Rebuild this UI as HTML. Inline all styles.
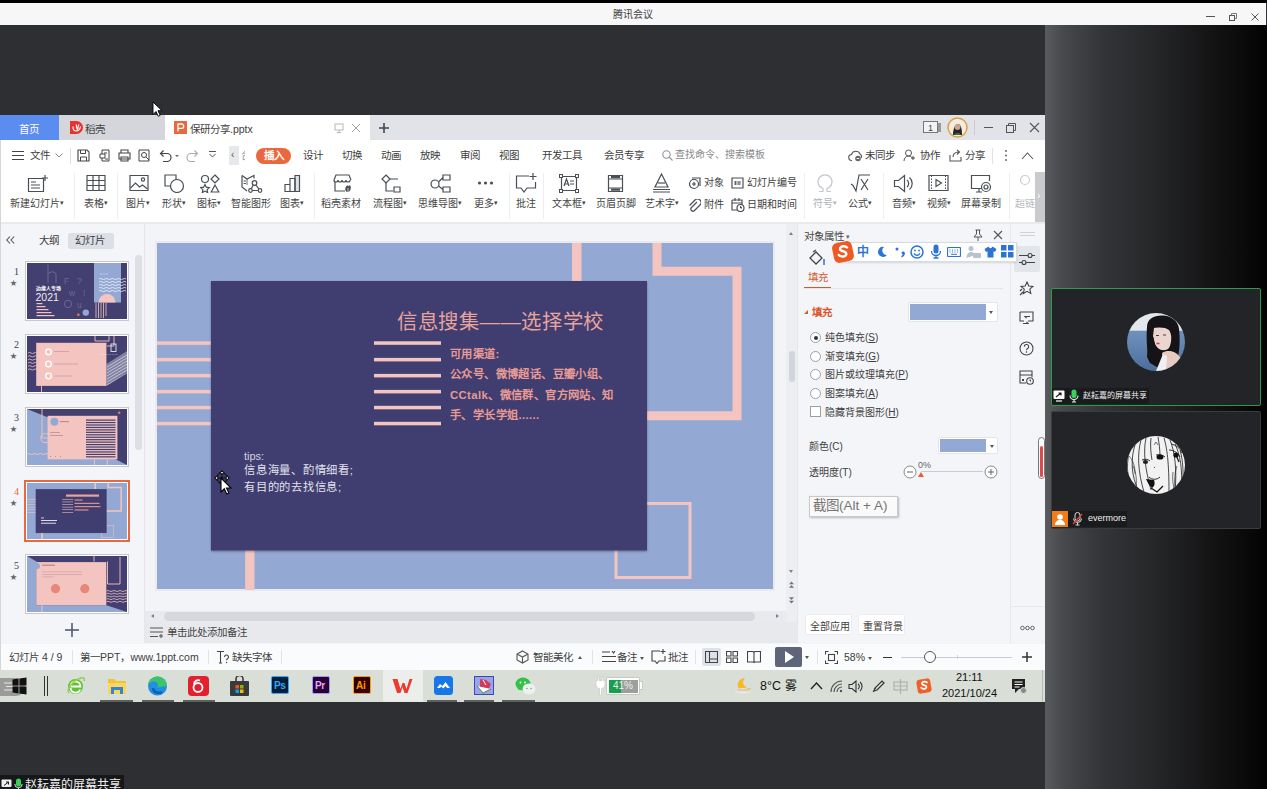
<!DOCTYPE html>
<html lang="zh-CN"><head><meta charset="utf-8">
<style>
*{margin:0;padding:0;box-sizing:border-box}
html,body{width:1267px;height:789px;overflow:hidden;background:#2e2f33;font-family:"Liberation Sans",sans-serif;position:relative}
.a{position:absolute}
.t{position:absolute;white-space:nowrap;line-height:1}
#topbar{left:0;top:0;width:1267px;height:3px;background:#000}
#title{left:0;top:3px;width:1266px;height:22px;background:#f7f7f8}
#rside{left:1045px;top:25px;width:222px;height:764px;background:linear-gradient(to right,#5a5b5f 0%,#48494c 8%,#343538 25%,#252628 50%,#141415 75%,#030303 100%)}
#wps{left:0;top:115px;width:1045px;height:587px;background:#fff;overflow:hidden}
#tabbar{left:0;top:0;width:1045px;height:25px;background:#e1e3e8}
#menu{left:0;top:25px;width:1045px;height:28px;background:#fff}
#tools{left:0;top:54px;width:1045px;height:53px;background:#fff}
#work{left:0;top:109px;border-top:0;width:1045px;height:420px;background:#f3f4f7}
#status{left:0;top:529px;width:1045px;height:26px;background:#fafbfc}
#taskbar{left:0;top:555px;width:1045px;height:32px;background:#d9ded7}
</style></head><body>
<div class="a" id="topbar"></div>
<div class="a" id="title">
  <div class="t" style="left:613px;top:7px;font-size:10px;color:#404040">腾讯会议</div>
  <div class="a" style="left:1206px;top:13px;width:9px;height:1px;background:#555"></div>
  <svg class="a" style="left:1229px;top:10px" width="8" height="8" viewBox="0 0 8 8"><rect x=".5" y="2.5" width="5" height="5" fill="none" stroke="#555"/><path d="M2.5 2.5V.5h5v5h-2" fill="none" stroke="#777"/></svg>
  <svg class="a" style="left:1251px;top:10px" width="8" height="8" viewBox="0 0 8 8"><path d="M.5 .5L7.5 7.5M7.5 .5L.5 7.5" stroke="#555" stroke-width="1"/></svg>
</div>
<div class="a" id="rside"></div>
<div class="a" id="wps">
  <div class="a" id="tabbar">
    <div class="a" style="left:0;top:0;width:59px;height:25px;background:#5b8df0"></div>
    <div class="t" style="left:19px;top:8.5px;font-size:10.5px;color:#fff">首页</div>
    <div class="a" style="left:59px;top:0;width:106px;height:25px;background:#d4d6db"></div>
    <svg class="a" style="left:70px;top:6px" width="13" height="13" viewBox="0 0 13 13"><path d="M0 0h6.5a6.5 6.5 0 0 1 0 13H0z" fill="#e8322f"/><path d="M3 5.5c0 3 1.5 4.5 3 4.5M6 10c2 0 4-1.5 4.5-4.5M6.5 3.5c-.5 2 0 4 1 5.5M9 3.5c-1 1.5-1.5 3-1 4.5" stroke="#fff" stroke-width="1.2" fill="none"/></svg>
    <div class="t" style="left:85px;top:8.5px;font-size:10.5px;color:#444">稻壳</div>
    <div class="a" style="left:165px;top:0;width:205px;height:25px;background:#fff"></div>
    <svg class="a" style="left:174px;top:6px" width="13" height="13" viewBox="0 0 13 13"><rect width="13" height="13" fill="#e8693c"/><path d="M4 10.5V3h3.5a2.2 2.2 0 0 1 0 4.4H4" stroke="#fff" stroke-width="1.3" fill="none"/></svg>
    <div class="t" style="left:190px;top:8.5px;font-size:10.5px;color:#404040">保研分享.pptx</div>
    <svg class="a" style="left:334px;top:8px" width="10" height="10" viewBox="0 0 10 10"><rect x="1" y="1" width="8" height="6" fill="none" stroke="#b8b8b8"/><path d="M5 7v2M3 9.5h4" stroke="#b8b8b8"/></svg>
    <svg class="a" style="left:351px;top:8px" width="10" height="10" viewBox="0 0 10 10"><path d="M1 1L9 9M9 1L1 9" stroke="#a0a0a0" stroke-width="1"/></svg>
    <svg class="a" style="left:378px;top:7px" width="12" height="12" viewBox="0 0 12 12"><path d="M6 1v10M1 6h10" stroke="#3e4452" stroke-width="1.6"/></svg>
    <svg class="a" style="left:923px;top:6px" width="19" height="12" viewBox="0 0 19 12"><rect x="0.5" y="0.5" width="14" height="11" fill="#f2f3f5" stroke="#777"/><rect x="15" y="2" width="3" height="9" fill="#999"/><text x="7.5" y="9.5" font-size="9" text-anchor="middle" fill="#444" font-family="Liberation Sans">1</text></svg>
    <svg class="a" style="left:947px;top:2px" width="21" height="21" viewBox="0 0 21 21"><circle cx="10.5" cy="10.5" r="9.5" fill="#f3ece3" stroke="#d9a440" stroke-width="1.5"/><path d="M6 18c0-6 2-11 5-11s4 5 4 11z" fill="#2a2222"/><circle cx="10.5" cy="10" r="3" fill="#caa48c"/><path d="M7 18c1-3 6-3 7 0z" fill="#3d6b3d"/></svg>
    <div class="a" style="left:974px;top:5px;width:1px;height:15px;background:#ccc"></div>
    <div class="a" style="left:984px;top:12px;width:9px;height:1px;background:#555"></div>
    <svg class="a" style="left:1005px;top:7px" width="12" height="11" viewBox="0 0 12 11"><rect x="1.5" y="3.5" width="7" height="7" fill="none" stroke="#555"/><path d="M3.5 3.5V1.5h7v7h-2" fill="none" stroke="#555"/></svg>
    <svg class="a" style="left:1029px;top:7px" width="11" height="11" viewBox="0 0 11 11"><path d="M1 1L10 10M10 1L1 10" stroke="#555" stroke-width="1.1"/></svg>
  </div>
  <div class="a" id="menu"><div class="a" style="left:0;top:1px;width:1045px;height:27px"><svg class="a" style="left:12px;top:10px" width="12" height="9" viewBox="0 0 12 9"><path d="M0 .5h12M0 4.5h12M0 8.5h12" stroke="#444"/></svg><div class="t" style="left:30px;top:9px;font-size:10.5px;color:#404040;">文件</div><svg class="a" style="left:55px;top:12px" width="8" height="5" viewBox="0 0 8 5"><path d="M.5.5L4 4 7.5.5" stroke="#888" fill="none"/></svg><div class="a" style="left:70px;top:7px;width:1px;height:16px;background:#e0e0e0"></div><svg class="a" style="left:77px;top:8px" width="13" height="13" viewBox="0 0 13 13"><path d="M1 1h9l2 2v9H1z" fill="none" stroke="#444" stroke-width="1.1"/><path d="M3.5 1v3.5h5V1M3.5 12V8h6v4" fill="none" stroke="#444"/></svg><svg class="a" style="left:99px;top:8px" width="13" height="13" viewBox="0 0 13 13"><path d="M3 1h7v11H3z" fill="none" stroke="#444"/><path d="M1 5h5v4H1z" fill="#fff" stroke="#444"/><path d="M5 4h3M6 10h3" stroke="#444"/></svg><svg class="a" style="left:118px;top:8px" width="13" height="13" viewBox="0 0 13 13"><path d="M3 4V1h7v3M1 4h11v6H1zM3 8h7v4H3z" fill="#fff" stroke="#444" stroke-width="1.1"/></svg><svg class="a" style="left:138px;top:8px" width="13" height="13" viewBox="0 0 13 13"><path d="M1 1h10v11H1z" fill="none" stroke="#444"/><circle cx="6" cy="6" r="2.5" fill="none" stroke="#444"/><path d="M8 8l3 3" stroke="#444"/></svg><svg class="a" style="left:159px;top:8px" width="13" height="13" viewBox="0 0 13 13"><path d="M2 4.5h6a4 4 0 0 1 0 8H4M4.5 1.5L1.5 4.5 4.5 7.5" fill="none" stroke="#444" stroke-width="1.2"/></svg><div class="a" style="left:175px;top:14px;width:0;height:0;border-left:2px solid transparent;border-right:2px solid transparent;border-top:2px solid #666"></div><svg class="a" style="left:186px;top:8px" width="13" height="13" viewBox="0 0 13 13"><path d="M11 4.5H5a4 4 0 0 0 0 8h4M8.5 1.5l3 3-3 3" fill="none" stroke="#aaa" stroke-width="1.1"/></svg><svg class="a" style="left:209px;top:10px" width="7" height="8" viewBox="0 0 7 8"><path d="M0 .5h7M.5 3l3 3 3-3" stroke="#555" fill="none"/></svg><div class="a" style="left:229px;top:5px;width:10px;height:19px;background:#e6e8ec"></div><div class="t" style="left:231px;top:9px;font-size:10px;color:#555;">‹</div><div class="t" style="left:241px;top:9px;font-size:10.5px;color:#999;width:4px;overflow:hidden">台</div><div class="a" style="left:256px;top:7px;width:35px;height:16px;border-radius:8px;background:#e9683e"></div><div class="t" style="left:264px;top:9px;font-size:10.5px;color:#fff;font-weight:bold">插入</div><div class="t" style="left:303px;top:9px;font-size:10.5px;color:#404040;">设计</div><div class="t" style="left:342px;top:9px;font-size:10.5px;color:#404040;">切换</div><div class="t" style="left:381px;top:9px;font-size:10.5px;color:#404040;">动画</div><div class="t" style="left:420px;top:9px;font-size:10.5px;color:#404040;">放映</div><div class="t" style="left:460px;top:9px;font-size:10.5px;color:#404040;">审阅</div><div class="t" style="left:499px;top:9px;font-size:10.5px;color:#404040;">视图</div><div class="t" style="left:542px;top:9px;font-size:10.5px;color:#404040;">开发工具</div><div class="t" style="left:604px;top:9px;font-size:10.5px;color:#404040;">会员专享</div><svg class="a" style="left:662px;top:9px" width="11" height="11" viewBox="0 0 11 11"><circle cx="4.5" cy="4.5" r="3.7" fill="none" stroke="#8a9099" stroke-width="1.1"/><path d="M7.2 7.2L10.5 10.5" stroke="#8a9099" stroke-width="1.1"/></svg><div class="t" style="left:675px;top:9px;font-size:10px;color:#888;">查找命令、搜索模板</div><svg class="a" style="left:848px;top:9px" width="15" height="12" viewBox="0 0 15 12"><path d="M4 10.5a3 3 0 0 1-.5-6A4.5 4.5 0 0 1 12 4a3 3 0 0 1 1 4" fill="none" stroke="#555" stroke-width="1.1"/><circle cx="10" cy="8.5" r="2.8" fill="#666"/><path d="M8.7 8.5h2.6" stroke="#fff"/></svg><div class="t" style="left:865px;top:9px;font-size:10.5px;color:#404040;">未同步</div><svg class="a" style="left:903px;top:8px" width="13" height="13" viewBox="0 0 13 13"><circle cx="5.5" cy="4" r="3" fill="none" stroke="#555"/><path d="M1 12c0-3 2-5 4.5-5s4 1.5 4.5 3M10 7v4M8 9h4" fill="none" stroke="#555"/></svg><div class="t" style="left:920px;top:9px;font-size:10.5px;color:#404040;">协作</div><svg class="a" style="left:949px;top:8px" width="13" height="13" viewBox="0 0 13 13"><path d="M1 6v6h11V8M4 8c0-3 2-5 6-5M8 1l2.5 2L8 5.5" fill="none" stroke="#555" stroke-width="1.1"/></svg><div class="t" style="left:965px;top:9px;font-size:10.5px;color:#404040;">分享</div><div class="a" style="left:992px;top:7px;width:1px;height:16px;background:#e3e3e3"></div><svg class="a" style="left:1004px;top:8px" width="4" height="13" viewBox="0 0 4 13"><circle cx="2" cy="2" r="1" fill="#666"/><circle cx="2" cy="6.5" r="1" fill="#666"/><circle cx="2" cy="11" r="1" fill="#666"/></svg><svg class="a" style="left:1021px;top:11px" width="13" height="8" viewBox="0 0 13 8"><path d="M1 7l5.5-6L12 7" fill="none" stroke="#555" stroke-width="1.1"/></svg></div></div>
  <div class="a" id="tools"><svg class="a" style="left:27px;top:5px" width="22" height="19" viewBox="0 0 22 19"><path d="M1.5 4.5h15v13h-15z" fill="none" stroke="#4a4f57" stroke-width="1.2"/><path d="M4 8h5M4 11h9M4 14h9" fill="none" stroke="#4a4f57" stroke-width="1.2"/><path d="M18 1v6M15 4h6" fill="none" stroke="#4a4f57" stroke-width="1.2"/></svg><div class="t" style="left:-23px;top:30px;width:120px;text-align:center;font-size:10px;color:#444">新建幻灯片<span style='font-size:7px;vertical-align:2px'>▾</span></div><div class="a" style="left:74px;top:4px;width:1px;height:46px;background:#eceef0"></div><svg class="a" style="left:86px;top:5px" width="20" height="18" viewBox="0 0 20 18"><path d="M1 1.5h18v15H1zM1 6.5h18M1 11.5h18M7 1.5v15M13 1.5v15" fill="none" stroke="#4a4f57" stroke-width="1.2"/></svg><div class="t" style="left:36px;top:30px;width:120px;text-align:center;font-size:10px;color:#444">表格<span style='font-size:7px;vertical-align:2px'>▾</span></div><div class="a" style="left:117px;top:4px;width:1px;height:46px;background:#eceef0"></div><svg class="a" style="left:129px;top:5px" width="20" height="18" viewBox="0 0 20 18"><path d="M1 1.5h18v15H1z" fill="none" stroke="#4a4f57" stroke-width="1.2"/><path d="M1.5 14l5-5 4 4 3-2 5 4" fill="none" stroke="#4a4f57" stroke-width="1.2"/><circle cx="14" cy="5.5" r="1.6" fill="none" stroke="#4a4f57" stroke-width="1.2"/></svg><div class="t" style="left:78px;top:30px;width:120px;text-align:center;font-size:10px;color:#444">图片<span style='font-size:7px;vertical-align:2px'>▾</span></div><svg class="a" style="left:164px;top:5px" width="21" height="19" viewBox="0 0 21 19"><path d="M1 1h11v11H1z" fill="none" stroke="#4a4f57" stroke-width="1.2"/><circle cx="13" cy="12" r="6.5" fill="#fff" stroke="#4a4f57" stroke-width="1.2"/></svg><div class="t" style="left:114px;top:30px;width:120px;text-align:center;font-size:10px;color:#444">形状<span style='font-size:7px;vertical-align:2px'>▾</span></div><svg class="a" style="left:200px;top:5px" width="20" height="19" viewBox="0 0 20 19"><circle cx="5" cy="5" r="3.5" fill="none" stroke="#4a4f57" stroke-width="1.2"/><path d="M15 1l4 4-4 4-4-4z" fill="none" stroke="#4a4f57" stroke-width="1.2"/><path d="M5 10.5l1.3 2.7 3 .4-2.2 2 .6 3-2.7-1.5-2.7 1.5.6-3-2.2-2 3-.4z" fill="none" stroke="#4a4f57" stroke-width="1.2"/><path d="M15 11l3.8 7h-7.6z" fill="none" stroke="#4a4f57" stroke-width="1.2"/></svg><div class="t" style="left:149px;top:30px;width:120px;text-align:center;font-size:10px;color:#444">图标<span style='font-size:7px;vertical-align:2px'>▾</span></div><svg class="a" style="left:241px;top:5px" width="22" height="19" viewBox="0 0 22 19"><path d="M1 1.5L6 5l7-3.5v3" fill="none" stroke="#4a4f57" stroke-width="1.2"/><path d="M1 1.5V13l5 4" fill="none" stroke="#4a4f57" stroke-width="1.2"/><path d="M6 5v6" stroke="#4a4f57" stroke-width=".8"/><path d="M2.5 7h2.5M2.5 9.5h2.5" stroke="#4a4f57" stroke-width=".9"/><circle cx="13.5" cy="9" r="2.3" fill="none" stroke="#4a4f57" stroke-width="1.2"/><circle cx="9.5" cy="16.5" r="1.8" fill="none" stroke="#4a4f57" stroke-width="1.2"/><circle cx="19" cy="16.5" r="1.8" fill="none" stroke="#4a4f57" stroke-width="1.2"/><path d="M12.3 11l-2 3.8M14.8 11l3 3.8M11.3 16.5h5.9" fill="none" stroke="#4a4f57" stroke-width="1.2"/></svg><div class="t" style="left:191px;top:30px;width:120px;text-align:center;font-size:10px;color:#444">智能图形</div><svg class="a" style="left:284px;top:5px" width="17" height="19" viewBox="0 0 17 19"><path d="M11 1.5h4.5v16H11z" fill="#dfe2e8" stroke="#4a4f57" stroke-width="1.2"/><path d="M1 10.5h5v7H1zM6 4.5h5v13H6z" fill="none" stroke="#4a4f57" stroke-width="1.2"/></svg><div class="t" style="left:232px;top:30px;width:120px;text-align:center;font-size:10px;color:#444">图表<span style='font-size:7px;vertical-align:2px'>▾</span></div><div class="a" style="left:314px;top:4px;width:1px;height:46px;background:#eceef0"></div><svg class="a" style="left:333px;top:5px" width="20" height="19" viewBox="0 0 20 19"><path d="M1 6l2-5h13l2 5" fill="none" stroke="#4a4f57" stroke-width="1.2"/><path d="M1 6c0 1.5 1 2 2 2s2-.5 2-2c0 1.5 1 2 2 2s2-.5 2-2c0 1.5 1 2 2 2s2-.5 2-2c0 1.5 1 2 2 2s2-.5 2-2" fill="none" stroke="#4a4f57" stroke-width="1.2"/><path d="M2 8v9h10" fill="none" stroke="#4a4f57" stroke-width="1.2"/><path d="M14.5 18c-3 0-3-5 0-7 .5 2 1 1 2.5 0 1.5 2 1 7-2.5 7z" fill="#4a4f57"/><path d="M15 18v-4" stroke="#fff" stroke-width=".7"/></svg><div class="t" style="left:281px;top:30px;width:120px;text-align:center;font-size:10px;color:#444">稻壳素材</div><svg class="a" style="left:380px;top:5px" width="22" height="19" viewBox="0 0 22 19"><path d="M6 1l4 4-4 4-4-4z" fill="none" stroke="#4a4f57" stroke-width="1.2"/><path d="M10 5h8M6 9v8h7" fill="none" stroke="#4a4f57" stroke-width="1.2"/><path d="M14 13h6v5h-6z" fill="none" stroke="#4a4f57" stroke-width="1.2"/></svg><div class="t" style="left:330px;top:30px;width:120px;text-align:center;font-size:10px;color:#444">流程图<span style='font-size:7px;vertical-align:2px'>▾</span></div><svg class="a" style="left:430px;top:5px" width="21" height="19" viewBox="0 0 21 19"><circle cx="5" cy="10" r="4" fill="none" stroke="#4a4f57" stroke-width="1.2"/><path d="M13 1h7v5h-7zM13 13h7v5h-7zM8.5 8l4.5-4.5M8.5 12l4.5 3.5" fill="none" stroke="#4a4f57" stroke-width="1.2"/></svg><div class="t" style="left:380px;top:30px;width:120px;text-align:center;font-size:10px;color:#444">思维导图<span style='font-size:7px;vertical-align:2px'>▾</span></div><svg class="a" style="left:477px;top:11px" width="17" height="6" viewBox="0 0 17 6"><circle cx="2.5" cy="3" r="1.6" fill="#4a4f57"/><circle cx="8.5" cy="3" r="1.6" fill="#4a4f57"/><circle cx="14.5" cy="3" r="1.6" fill="#4a4f57"/></svg><div class="t" style="left:426px;top:30px;width:120px;text-align:center;font-size:10px;color:#444">更多<span style='font-size:7px;vertical-align:2px'>▾</span></div><div class="a" style="left:509px;top:4px;width:1px;height:46px;background:#eceef0"></div><svg class="a" style="left:515px;top:4px" width="22" height="20" viewBox="0 0 22 20"><path d="M14 3H1.5v12H6l3 4 3-4h8.5v-6" fill="none" stroke="#4a4f57" stroke-width="1.2"/><path d="M18 0v7M14.5 3.5h7" fill="none" stroke="#4a4f57" stroke-width="1.2"/></svg><div class="t" style="left:466px;top:30px;width:120px;text-align:center;font-size:10px;color:#444">批注</div><div class="a" style="left:543px;top:4px;width:1px;height:46px;background:#eceef0"></div><svg class="a" style="left:559px;top:5px" width="20" height="19" viewBox="0 0 20 19"><path d="M2.5 2.5h15v14h-15z" fill="none" stroke="#4a4f57" stroke-width="1.2"/><rect x="0.5" y="0.5" width="3" height="3" fill="#fff" stroke="#4a4f57"/><rect x="16.5" y="0.5" width="3" height="3" fill="#fff" stroke="#4a4f57"/><rect x="0.5" y="15.5" width="3" height="3" fill="#fff" stroke="#4a4f57"/><rect x="16.5" y="15.5" width="3" height="3" fill="#fff" stroke="#4a4f57"/><path d="M5 12l2.5-7 2.5 7M6 10h3M11 7h4M11 10h4" fill="none" stroke="#4a4f57" stroke-width="1.2"/></svg><div class="t" style="left:509px;top:30px;width:120px;text-align:center;font-size:10px;color:#444">文本框<span style='font-size:7px;vertical-align:2px'>▾</span></div><svg class="a" style="left:607px;top:5px" width="17" height="19" viewBox="0 0 17 19"><path d="M1.5 1.5h14v16h-14z" fill="none" stroke="#4a4f57" stroke-width="1.2"/><path d="M1.5 5h14M1.5 14h14" fill="none" stroke="#4a4f57" stroke-width="1.2"/><path d="M4 3.2h9M4 15.7h9" stroke="#4a4f57" stroke-width="2.2"/></svg><div class="t" style="left:556px;top:30px;width:120px;text-align:center;font-size:10px;color:#444">页眉页脚</div><svg class="a" style="left:652px;top:4px" width="19" height="20" viewBox="0 0 19 20"><path d="M9.5 1L3 14h13z" fill="none" stroke="#4a4f57" stroke-width="1.2"/><path d="M6 10h7" fill="none" stroke="#4a4f57" stroke-width="1.2"/><path d="M1 16.5h17M1 19h17" fill="none" stroke="#4a4f57" stroke-width="1.2"/></svg><div class="t" style="left:602px;top:30px;width:120px;text-align:center;font-size:10px;color:#444">艺术字<span style='font-size:7px;vertical-align:2px'>▾</span></div><svg class="a" style="left:688px;top:8px" width="13" height="13" viewBox="0 0 13 13"><path d="M4 1h8v8" fill="none" stroke="#4a4f57" stroke-width="1.2"/><circle cx="6" cy="7" r="4.5" fill="none" stroke="#4a4f57" stroke-width="1.2"/><path d="M4 7h4M6 5v4" fill="none" stroke="#4a4f57" stroke-width="1.2"/></svg><div class="t" style="left:704px;top:9px;font-size:10px;color:#404040;">对象</div><svg class="a" style="left:688px;top:30px" width="13" height="13" viewBox="0 0 13 13"><path d="M9 3L3.5 8.5a2 2 0 0 0 3 3L12 6a3.5 3.5 0 0 0-5-5L1.5 6.5" fill="none" stroke="#4a4f57" stroke-width="1.2"/></svg><div class="t" style="left:704px;top:31px;font-size:10px;color:#404040;">附件</div><svg class="a" style="left:731px;top:8px" width="13" height="12" viewBox="0 0 13 12"><path d="M1 1h11v10H1z" fill="none" stroke="#4a4f57" stroke-width="1.2"/><path d="M4.5 4v4M8 4v4M3 5h7M3 7h7" stroke="#4a4f57" stroke-width=".8"/></svg><div class="t" style="left:747px;top:9px;font-size:10px;color:#404040;">幻灯片编号</div><svg class="a" style="left:731px;top:29px" width="14" height="14" viewBox="0 0 14 14"><path d="M1 2h10v5M1 2v10h5M1 5h10M4 0v3M8 0v3" fill="none" stroke="#4a4f57" stroke-width="1.2"/><circle cx="9.5" cy="10" r="3.5" fill="none" stroke="#4a4f57" stroke-width="1.2"/><path d="M9.5 8v2h1.5" stroke="#4a4f57"/></svg><div class="t" style="left:747px;top:31px;font-size:10px;color:#404040;">日期和时间</div><div class="a" style="left:804px;top:4px;width:1px;height:46px;background:#eceef0"></div><svg class="a" style="left:815px;top:5px" width="20" height="19" viewBox="0 0 20 19"><path d="M4 17.5h4v-3a7 7 0 1 1 4 0v3h4" fill="none" stroke="#c4c7cc" stroke-width="1.2"/></svg><div class="t" style="left:765px;top:30px;width:120px;text-align:center;font-size:10px;color:#b0b3b8">符号<span style='font-size:7px;vertical-align:2px'>▾</span></div><svg class="a" style="left:850px;top:5px" width="21" height="19" viewBox="0 0 21 19"><path d="M1 10l2 1.5L6 17 9 1h11" fill="none" stroke="#4a4f57" stroke-width="1.2"/><path d="M11 5l7 11M18 5l-7 11" fill="none" stroke="#4a4f57" stroke-width="1.2"/></svg><div class="t" style="left:800px;top:30px;width:120px;text-align:center;font-size:10px;color:#444">公式<span style='font-size:7px;vertical-align:2px'>▾</span></div><div class="a" style="left:883px;top:4px;width:1px;height:46px;background:#eceef0"></div><svg class="a" style="left:893px;top:5px" width="21" height="19" viewBox="0 0 21 19"><path d="M1.5 6.5h4l6-5v16l-6-5h-4z" fill="none" stroke="#4a4f57" stroke-width="1.2"/><path d="M14 6a4.5 4.5 0 0 1 0 7M16.5 3.5a8 8 0 0 1 0 12" fill="none" stroke="#4a4f57" stroke-width="1.2"/></svg><div class="t" style="left:844px;top:30px;width:120px;text-align:center;font-size:10px;color:#444">音频<span style='font-size:7px;vertical-align:2px'>▾</span></div><svg class="a" style="left:928px;top:5px" width="21" height="18" viewBox="0 0 21 18"><path d="M1 1.5h19v15H1z" fill="none" stroke="#4a4f57" stroke-width="1.2"/><path d="M3.5 1.5v15M17.5 1.5v15" stroke="#4a4f57" stroke-width="1" stroke-dasharray="1.5 1.5"/><path d="M8 5.5v7l5.5-3.5z" fill="none" stroke="#4a4f57" stroke-width="1.2"/></svg><div class="t" style="left:879px;top:30px;width:120px;text-align:center;font-size:10px;color:#444">视频<span style='font-size:7px;vertical-align:2px'>▾</span></div><svg class="a" style="left:970px;top:5px" width="22" height="19" viewBox="0 0 22 19"><path d="M14 14.5H1.5v-13h18V7" fill="none" stroke="#4a4f57" stroke-width="1.2"/><path d="M6 18h6M9 14.5V18" fill="none" stroke="#4a4f57" stroke-width="1.2"/><circle cx="16" cy="13" r="4.5" fill="#fff" stroke="#4a4f57" stroke-width="1.2"/><circle cx="16" cy="13" r="2" fill="none" stroke="#4a4f57" stroke-width="1.2"/></svg><div class="t" style="left:921px;top:30px;width:120px;text-align:center;font-size:10px;color:#444">屏幕录制</div><div class="a" style="left:1009px;top:4px;width:1px;height:46px;background:#eceef0"></div><svg class="a" style="left:1016px;top:5px" width="18" height="19" viewBox="0 0 18 19"><circle cx="9" cy="6" r="4.5" fill="none" stroke="#c8cbd0" stroke-width="1.2"/></svg><div class="t" style="left:1015px;top:30px;font-size:10px;color:#b8bbc0;width:20px;overflow:hidden">超链</div><div class="a" style="left:1035px;top:3px;width:10px;height:50px;background:#c9cacd"></div><div class="t" style="left:1037px;top:22px;font-size:10px;color:#fff;">›</div></div>
  <div class="a" style="left:0;top:107px;width:1045px;height:2px;background:#e9eaee"></div><div class="a" id="work"></div>
  <div class="a" id="status"></div>
  <div class="a" id="taskbar"></div>
</div>
<div class="a" style="left:0px;top:224px;width:144px;height:419px;background:#f4f5f8;"></div><div class="a" style="left:144px;top:224px;width:1px;height:419px;background:#e4e6ea;"></div><svg class="a" style="left:6px;top:236px" width="9" height="8" viewBox="0 0 9 8"><path d="M4 .5L.8 4 4 7.5M8.2.5L5 4l3.2 3.5" fill="none" stroke="#555" stroke-width="1.1"/></svg><div class="t" style="left:39px;top:235px;font-size:10.5px;color:#404040;">大纲</div><div class="a" style="left:68px;top:233px;width:46px;height:16px;background:#dcdfe5;border-radius:2px"></div><div class="t" style="left:75px;top:235px;font-size:10.5px;color:#404040;">幻灯片</div><div class="a" style="left:135px;top:255px;width:7px;height:195px;background:#dddfe4;border-radius:3.5px"></div><div class="a" style="left:145px;top:224px;width:641px;height:387px;background:#f3f4f7;"></div><div class="a" style="left:145px;top:611px;width:641px;height:11px;background:#e9eaee;"></div><div class="a" style="left:164px;top:612px;width:591px;height:9px;background:#d6d8de;border-radius:4.5px"></div><div class="a" style="left:151px;top:614px;width:0;height:0;border-top:2.5px solid transparent;border-bottom:2.5px solid transparent;border-right:3px solid #7a8190"></div><div class="a" style="left:776px;top:614px;width:0;height:0;border-top:2.5px solid transparent;border-bottom:2.5px solid transparent;border-left:3px solid #7a8190"></div><div class="a" style="left:145px;top:622px;width:652px;height:21px;background:#e8e9ec;"></div><svg class="a" style="left:150px;top:627px" width="13" height="11" viewBox="0 0 13 11"><path d="M0 1h13M0 5h13M0 9.5h8M11 7v4M9 9h4" stroke="#555" stroke-width="1.1"/></svg><div class="t" style="left:167px;top:627px;font-size:10.5px;color:#444;">单击此处添加备注</div><div class="a" style="left:786px;top:224px;width:11px;height:398px;background:#eceef1;"></div><div class="a" style="left:789px;top:351px;width:6px;height:31px;background:#d2d5db;border-radius:3px"></div><div class="a" style="left:789px;top:232px;width:0;height:0;border-left:2.5px solid transparent;border-right:2.5px solid transparent;border-bottom:3px solid #7a8190"></div><div class="a" style="left:789px;top:570px;width:0;height:0;border-left:2.5px solid transparent;border-right:2.5px solid transparent;border-top:3px solid #7a8190"></div><svg class="a" style="left:788px;top:581px" width="7" height="7" viewBox="0 0 7 7"><path d="M1 3.2L3.5 .5 6 3.2zM1 6.7L3.5 4 6 6.7z" fill="#6f7686"/></svg><svg class="a" style="left:788px;top:597px" width="7" height="7" viewBox="0 0 7 7"><path d="M1 .3L3.5 3 6 .3zM1 3.8L3.5 6.5 6 3.8z" fill="#6f7686"/></svg><div class="a" style="left:797px;top:224px;width:213px;height:419px;background:#f4f5f8;"></div><div class="a" style="left:797px;top:224px;width:1px;height:419px;background:#e5e7eb;"></div><div class="a" style="left:1010px;top:224px;width:35px;height:419px;background:#f4f5f8;"></div><div class="a" style="left:1010px;top:224px;width:1px;height:419px;background:#e5e7eb;"></div>
<svg class="a" style="left:157px;top:243px;overflow:visible" width="616" height="346" viewBox="0 0 616 346">
<defs><filter id="sh" x="-5%" y="-5%" width="110%" height="110%"><feDropShadow dx="0" dy="1" stdDeviation="1.2" flood-color="#000" flood-opacity=".35"/></filter></defs>
<rect x="-2" y="-2" width="620" height="350" fill="#e9eaee"/>
<g id="slide4" transform="scale(1)"><rect width="616" height="346" fill="#93a8d3"/>
<rect x="415" y="0" width="9.5" height="40" fill="#f4c5c0"/>
<path d="M500 0V28.3H580V172.8H470" fill="none" stroke="#f4c5c0" stroke-width="9"/>
<rect x="459" y="260.5" width="74" height="74" fill="none" stroke="#f4c5c0" stroke-width="3"/>
<rect x="88.2" y="300" width="9.3" height="47" fill="#f4c5c0"/>
<g fill="#f4c5c0">
<rect x="0" y="98.3" width="60" height="3.5"/><rect x="0" y="114.9" width="60" height="3.5"/><rect x="0" y="130.9" width="60" height="3.5"/><rect x="0" y="146.9" width="60" height="3.5"/><rect x="0" y="162.8" width="60" height="3.5"/><rect x="0" y="178.8" width="60" height="3.5"/>
</g>
<rect x="54" y="38" width="436" height="269.5" fill="#413e6f" filter="url(#sh)"/>
<g fill="#f4c5c0">
<rect x="217" y="98.3" width="67" height="3.5"/><rect x="217" y="114.9" width="67" height="3.5"/><rect x="217" y="130.9" width="67" height="3.5"/><rect x="217" y="146.9" width="67" height="3.5"/><rect x="217" y="162.8" width="67" height="3.5"/><rect x="217" y="178.8" width="67" height="3.5"/>
</g>
</g></svg>
<div class="t" style="left:397px;top:311.5px;font-size:20.4px;letter-spacing:.6px;color:#e8a39d">信息搜集——选择学校</div>
<div class="t" style="left:450px;top:344px;font-size:11.3px;letter-spacing:.4px;line-height:20.3px;color:#e79a94;font-weight:bold;white-space:pre">可用渠道:
公众号、微博超话、豆瓣小组、
CCtalk、微信群、官方网站、知
手、学长学姐......</div>
<div class="t" style="left:244px;top:451px;font-size:11px;color:#d2d2e0;font-weight:300">tips:</div>
<div class="t" style="left:244px;top:462px;font-size:11.3px;letter-spacing:.75px;line-height:17px;color:#e2e2ec;white-space:pre">信息海量、酌情细看;
有目的的去找信息;</div>

<div class="a" style="left:25px;top:261px;width:104px;height:60px;border:1px solid #c6c8cd;background:#fff"></div><svg class="a" style="left:27px;top:263px" width="100" height="56" viewBox="0 0 100 56"><rect width="100" height="56" fill="#433f70"/>
<rect x="67" y="0" width="27" height="39.5" fill="#93a8d3"/>
<path d="M72 16 q1.5 -1.1 3 0 q1.5 1.1 3 0 q1.5 -1.1 3 0 q1.5 1.1 3 0 q1.5 -1.1 3 0 q1.5 1.1 3 0 q1.5 -1.1 3 0 q1.5 1.1 3 0 q1.5 -1.1 3 0" fill="none" stroke="#fff" stroke-width="0.7"/><path d="M72 19 q1.5 -1.1 3 0 q1.5 1.1 3 0 q1.5 -1.1 3 0 q1.5 1.1 3 0 q1.5 -1.1 3 0 q1.5 1.1 3 0 q1.5 -1.1 3 0 q1.5 1.1 3 0 q1.5 -1.1 3 0" fill="none" stroke="#fff" stroke-width="0.7"/><path d="M72 22 q1.5 -1.1 3 0 q1.5 1.1 3 0 q1.5 -1.1 3 0 q1.5 1.1 3 0 q1.5 -1.1 3 0 q1.5 1.1 3 0 q1.5 -1.1 3 0 q1.5 1.1 3 0 q1.5 -1.1 3 0" fill="none" stroke="#fff" stroke-width="0.7"/><path d="M72 25 q1.5 -1.1 3 0 q1.5 1.1 3 0 q1.5 -1.1 3 0 q1.5 1.1 3 0 q1.5 -1.1 3 0 q1.5 1.1 3 0 q1.5 -1.1 3 0 q1.5 1.1 3 0 q1.5 -1.1 3 0" fill="none" stroke="#fff" stroke-width="0.7"/><path d="M72 28 q1.5 -1.1 3 0 q1.5 1.1 3 0 q1.5 -1.1 3 0 q1.5 1.1 3 0 q1.5 -1.1 3 0 q1.5 1.1 3 0 q1.5 -1.1 3 0 q1.5 1.1 3 0 q1.5 -1.1 3 0" fill="none" stroke="#fff" stroke-width="0.7"/>
<circle cx="74" cy="11" r=".6" fill="#fff"/><circle cx="77" cy="11" r=".6" fill="#fff"/><circle cx="80" cy="11" r=".6" fill="#fff"/>
<path d="M71.5 39.5a8.5 8.5 0 0 1 17 0z" fill="#f4c5c0"/>
<g stroke="#f4c5c0" stroke-width=".8"><path d="M69 40v15M71.5 40v15M74 40v15M76.5 40v15M79 40v13"/></g>
<g fill="#f4c5c0"><rect x="9.5" y="40" width="6" height="1.2"/><rect x="9.5" y="43" width="9" height="1.2"/><rect x="9.5" y="46" width="12" height="1.2"/><rect x="9.5" y="49" width="15" height="1.2"/><rect x="9.5" y="52" width="18" height="1.2"/></g>
<g fill="none" stroke="#6c6a94" stroke-width="1"><path d="M21 1.5v18.5M21 11c2-3 8-3 8 1v8"/><ellipse cx="41" cy="41" rx="3.6" ry="3.8"/></g>
<g fill="#6c6a94" font-family="Liberation Sans" font-size="8.5"><text x="37" y="21">F</text><text x="50" y="21">?</text><text x="42" y="33">w</text><text x="56" y="33">!</text><text x="50" y="45">u</text></g>
<text x="8.5" y="27" font-size="5" fill="#fff" font-weight="bold">边缘人专场</text>
<text x="8.5" y="38" font-size="10.5" fill="#eee" font-family="Liberation Sans">2021</text>
<circle cx="58.8" cy="49.6" r="3.2" fill="#93a8d3"/><circle cx="51.4" cy="51.8" r="1.2" fill="#e8825c"/></svg><div class="a" style="left:25px;top:334px;width:104px;height:60px;border:1px solid #c6c8cd;background:#fff"></div><svg class="a" style="left:27px;top:336px" width="100" height="56" viewBox="0 0 100 56"><rect width="100" height="56" fill="#433f70"/>
<rect x="9.2" y="6.8" width="70.2" height="43.1" fill="#f4c5c0"/>
<path d="M1 17.0 q1.5 -1.1 3 0 q1.5 1.1 3 0 q1.5 -1.1 3 0" fill="none" stroke="#f4c5c0" stroke-width="0.8"/><path d="M1 20.3 q1.5 -1.1 3 0 q1.5 1.1 3 0 q1.5 -1.1 3 0" fill="none" stroke="#f4c5c0" stroke-width="0.8"/><path d="M1 23.6 q1.5 -1.1 3 0 q1.5 1.1 3 0 q1.5 -1.1 3 0" fill="none" stroke="#f4c5c0" stroke-width="0.8"/><path d="M1 26.9 q1.5 -1.1 3 0 q1.5 1.1 3 0 q1.5 -1.1 3 0" fill="none" stroke="#f4c5c0" stroke-width="0.8"/><path d="M1 30.2 q1.5 -1.1 3 0 q1.5 1.1 3 0 q1.5 -1.1 3 0" fill="none" stroke="#f4c5c0" stroke-width="0.8"/><path d="M1 33.5 q1.5 -1.1 3 0 q1.5 1.1 3 0 q1.5 -1.1 3 0" fill="none" stroke="#f4c5c0" stroke-width="0.8"/>
<g fill="none" stroke="#fff" stroke-width="1.3"><circle cx="21.5" cy="16" r="2.8"/><circle cx="21.5" cy="28" r="2.8"/><circle cx="21.5" cy="40" r="2.8"/></g>
<g fill="#c9a9b0"><rect x="27" y="15" width="15" height="1"/><rect x="27" y="27.5" width="24" height="1"/><rect x="27" y="39.5" width="18" height="1"/></g>
<path d="M68 0v5h14v-5M87 0v10h-7" fill="none" stroke="#f4c5c0" stroke-width=".9"/>
<rect x="84" y="8" width="5" height="7.5" fill="none" stroke="#fff" stroke-width=".8"/>
<text x="73" y="20" font-size="2.5" fill="#fff">一一一一一一</text>
<path d="M79.4 28L100 15V36L79.4 50z" fill="#fff" opacity=".35"/>
<g stroke="#fff" stroke-width=".5"><path d="M80 31l20-12M80 34l20-12M80 37l20-12M80 40l20-12M80 43l20-12M80 46l20-12M80 49l20-12"/></g>
<rect x="14" y="49.9" width=".9" height="6" fill="#f4c5c0"/></svg><div class="a" style="left:25px;top:407px;width:104px;height:60px;border:1px solid #c6c8cd;background:#fff"></div><svg class="a" style="left:27px;top:409px" width="100" height="56" viewBox="0 0 100 56"><rect width="100" height="56" fill="#93a8d3"/>
<path d="M0 0H100V56L88 50V8H20z" fill="#433f70"/>
<rect x="20.6" y="6.8" width="69.8" height="43.5" fill="#f4c5c0"/>
<g fill="#433f70"><rect x="59" y="10.50" width="29.5" height="1.2"/><rect x="59" y="12.95" width="29.5" height="1.2"/><rect x="59" y="15.40" width="29.5" height="1.2"/><rect x="59" y="17.85" width="29.5" height="1.2"/><rect x="59" y="20.30" width="29.5" height="1.2"/><rect x="59" y="22.75" width="29.5" height="1.2"/><rect x="59" y="25.20" width="29.5" height="1.2"/><rect x="59" y="27.65" width="29.5" height="1.2"/><rect x="59" y="30.10" width="29.5" height="1.2"/><rect x="59" y="32.55" width="29.5" height="1.2"/><rect x="59" y="35.00" width="29.5" height="1.2"/><rect x="59" y="37.45" width="29.5" height="1.2"/><rect x="59" y="39.90" width="29.5" height="1.2"/><rect x="59" y="42.35" width="29.5" height="1.2"/><rect x="59" y="44.80" width="29.5" height="1.2"/><rect x="59" y="47.25" width="29.5" height="1.2"/></g>
<circle cx="27.4" cy="12.7" r="4" fill="#93a8d3"/>
<g fill="#b98d95"><rect x="33" y="12" width="9" height="1.2"/><rect x="23" y="23" width="10" height=".8"/><rect x="23" y="26" width="13" height=".8"/><rect x="23" y="47" width="1" height="1"/><rect x="28" y="47" width="1" height="1"/><rect x="33" y="47" width="1" height="1"/></g>
<circle cx="18.4" cy="29.1" r="4.6" fill="none" stroke="#f4c5c0" stroke-width=".9"/>
<path d="M0 45 q1.5 -1 3 0 q1.5 1 3 0 q1.5 -1 3 0 q1.5 1 3 0 q1.5 -1 3 0 q1.5 1 3 0 q1.5 -1 3 0" fill="none" stroke="#f4c5c0" stroke-width="0.9"/>
<path d="M15 0v29h5.6" fill="none" stroke="#f4c5c0" stroke-width=".9"/>
<path d="M67.4 50.3V56M80.3 50.3V56" stroke="#f4c5c0" stroke-width=".9"/>
<circle cx="92.2" cy="3.7" r="1.2" fill="#e8825c"/></svg><div class="a" style="left:24px;top:480px;width:106px;height:62px;border:2px solid #e8693f;background:#fff"></div><svg class="a" style="left:27px;top:483px" width="100" height="56" viewBox="0 0 100 56"><g transform="scale(0.16234)"><use href="#slide4"/></g>
<g fill="#e8a39d"><rect x="39" y="11.5" width="33" height="2.2"/></g>
<g fill="#e79a94"><rect x="47.5" y="16.5" width="8" height="1.1"/><rect x="47.5" y="19.8" width="25" height="1.1"/><rect x="47.5" y="23.1" width="26" height="1.1"/><rect x="47.5" y="26.4" width="14" height="1.1"/></g>
<g fill="#dcdcea"><rect x="14" y="34.5" width="3" height=".9"/><rect x="14" y="37" width="16" height="1"/><rect x="14" y="39.7" width="15" height="1"/></g></svg><div class="a" style="left:25px;top:554px;width:104px;height:60px;border:1px solid #c6c8cd;background:#fff"></div><svg class="a" style="left:27px;top:556px" width="100" height="56" viewBox="0 0 100 56"><rect width="100" height="56" fill="#433f70"/>
<path d="M0 0L9.5 5.5V49.3H79.5L100 56H0z" fill="#93a8d3"/>
<rect x="9.3" y="6.1" width="70" height="43.1" fill="#f4c5c0"/>
<circle cx="10" cy="10" r="3" fill="#93a8d3"/>
<rect x="15" y="8.5" width="13" height="1.5" fill="#c78f8f"/>
<g fill="#caa3a6"><rect x="15" y="15.5" width="40" height=".7"/><rect x="15" y="18" width="40" height=".7"/><rect x="15" y="20.5" width="12" height=".7"/></g>
<circle cx="28.5" cy="32.7" r="4.6" fill="#e78778"/><circle cx="57.8" cy="32.7" r="4.6" fill="#e78778"/>
<path d="M80.5 5.5V28H93V1" fill="none" stroke="#f4c5c0" stroke-width=".9"/>
<path d="M67 0v5.5" stroke="#f4c5c0" stroke-width=".9"/>
<path d="M79.5 35.0 q1.5 -1 3 0 q1.5 1 3 0 q1.5 -1 3 0 q1.5 1 3 0 q1.5 -1 3 0 q1.5 1 3 0 q1.5 -1 3 0" fill="none" stroke="#f4c5c0" stroke-width="0.8"/><path d="M79.5 37.7 q1.5 -1 3 0 q1.5 1 3 0 q1.5 -1 3 0 q1.5 1 3 0 q1.5 -1 3 0 q1.5 1 3 0 q1.5 -1 3 0" fill="none" stroke="#f4c5c0" stroke-width="0.8"/><path d="M79.5 40.4 q1.5 -1 3 0 q1.5 1 3 0 q1.5 -1 3 0 q1.5 1 3 0 q1.5 -1 3 0 q1.5 1 3 0 q1.5 -1 3 0" fill="none" stroke="#f4c5c0" stroke-width="0.8"/><path d="M79.5 43.1 q1.5 -1 3 0 q1.5 1 3 0 q1.5 -1 3 0 q1.5 1 3 0 q1.5 -1 3 0 q1.5 1 3 0 q1.5 -1 3 0" fill="none" stroke="#f4c5c0" stroke-width="0.8"/><path d="M79.5 45.8 q1.5 -1 3 0 q1.5 1 3 0 q1.5 -1 3 0 q1.5 1 3 0 q1.5 -1 3 0 q1.5 1 3 0 q1.5 -1 3 0" fill="none" stroke="#f4c5c0" stroke-width="0.8"/>
<rect x="14.5" y="49.2" width=".9" height="6.8" fill="#f4c5c0"/></svg><div class="t" style="left:14px;top:266.5px;font-family:'Liberation Serif',serif;font-size:10px;color:#404040">1</div><div class="t" style="left:10px;top:278.5px;font-size:7px;color:#666">★</div><div class="t" style="left:14px;top:339.5px;font-family:'Liberation Serif',serif;font-size:10px;color:#404040">2</div><div class="t" style="left:10px;top:351.5px;font-size:7px;color:#666">★</div><div class="t" style="left:14px;top:412.5px;font-family:'Liberation Serif',serif;font-size:10px;color:#404040">3</div><div class="t" style="left:10px;top:424.5px;font-size:7px;color:#666">★</div><div class="t" style="left:14px;top:486.5px;font-family:'Liberation Serif',serif;font-size:10px;color:#e8693f">4</div><div class="t" style="left:10px;top:498.5px;font-size:7px;color:#666">★</div><div class="t" style="left:14px;top:560.5px;font-family:'Liberation Serif',serif;font-size:10px;color:#404040">5</div><div class="t" style="left:10px;top:572.5px;font-size:7px;color:#666">★</div><svg class="a" style="left:65px;top:623px" width="14" height="14" viewBox="0 0 14 14"><path d="M7 0v14M0 7h14" stroke="#4a5266" stroke-width="1.5"/></svg>
<div class="t" style="left:804px;top:231px;font-size:10.5px;color:#444;">对象属性<span style="font-size:7px;vertical-align:1px;color:#666"> ▾</span></div><svg class="a" style="left:972px;top:229px" width="12" height="12" viewBox="0 0 12 12"><path d="M3.5 1h5M4.5 1v4L2 8h8L7.5 5V1M6 8v4" fill="none" stroke="#555" stroke-width="1"/></svg><svg class="a" style="left:993px;top:230px" width="10" height="10" viewBox="0 0 10 10"><path d="M1 1L9 9M9 1L1 9" stroke="#555" stroke-width="1.1"/></svg><svg class="a" style="left:808px;top:249px" width="19" height="18" viewBox="0 0 19 18"><path d="M2 9l6-6 6 6-6 6z" fill="none" stroke="#444" stroke-width="1.3"/><path d="M5 3l3-2" stroke="#444" stroke-width="1.2"/><path d="M16 10v6" stroke="#6b8fd6" stroke-width="2"/></svg><div class="t" style="left:808px;top:272px;font-size:10.5px;color:#d9582b;">填充</div><div class="a" style="left:804px;top:287px;width:27px;height:2px;background:#d9582b;"></div><div class="a" style="left:804px;top:288px;width:199px;height:1px;background:#e3e5e9;"></div><div class="a" style="left:804px;top:310px;width:0;height:0;border-left:4px solid transparent;border-bottom:4px solid #d9582b"></div><div class="t" style="left:812px;top:307px;font-size:10.5px;color:#d9582b;font-weight:bold">填充</div><div class="a" style="left:908px;top:302px;width:90px;height:20px;background:#fff;border:1px solid #e3e5e9;border-radius:2px"></div><div class="a" style="left:910px;top:304px;width:76px;height:16px;background:#93a8d3;"></div><div class="a" style="left:989px;top:311px;width:0;height:0;border-left:2.5px solid transparent;border-right:2.5px solid transparent;border-top:3px solid #555"></div><div class="a" style="left:810px;top:332.2px;width:11px;height:11px;border-radius:50%;border:1px solid #9aa0a8;background:#fff"></div><div class="a" style="left:813.5px;top:335.7px;width:4px;height:4px;border-radius:50%;background:#333"></div><div class="t" style="left:825px;top:333.2px;font-size:10px;color:#404040;">纯色填充(<u>S</u>)</div><div class="a" style="left:810px;top:351.2px;width:11px;height:11px;border-radius:50%;border:1px solid #9aa0a8;background:#fff"></div><div class="t" style="left:825px;top:352.2px;font-size:10px;color:#404040;">渐变填充(<u>G</u>)</div><div class="a" style="left:810px;top:369.3px;width:11px;height:11px;border-radius:50%;border:1px solid #9aa0a8;background:#fff"></div><div class="t" style="left:825px;top:370.3px;font-size:10px;color:#404040;">图片或纹理填充(<u>P</u>)</div><div class="a" style="left:810px;top:388.0px;width:11px;height:11px;border-radius:50%;border:1px solid #9aa0a8;background:#fff"></div><div class="t" style="left:825px;top:389.0px;font-size:10px;color:#404040;">图案填充(<u>A</u>)</div><div class="a" style="left:810px;top:406px;width:11px;height:11px;border:1px solid #9aa0a8;background:#fff"></div><div class="t" style="left:825px;top:407.5px;font-size:10px;color:#404040;">隐藏背景图形(<u>H</u>)</div><div class="t" style="left:809px;top:441.5px;font-size:10px;color:#404040;">颜色(C)</div><div class="a" style="left:938px;top:437px;width:60px;height:17px;background:#fff;border:1px solid #e3e5e9;border-radius:2px"></div><div class="a" style="left:940px;top:439px;width:46px;height:13px;background:#93a8d3;"></div><div class="a" style="left:990px;top:445px;width:0;height:0;border-left:2.5px solid transparent;border-right:2.5px solid transparent;border-top:3px solid #555"></div><div class="t" style="left:809px;top:467.5px;font-size:10px;color:#404040;">透明度(T)</div><svg class="a" style="left:903px;top:465px" width="14" height="14" viewBox="0 0 14 14"><circle cx="7" cy="7" r="6" fill="#fff" stroke="#888"/><path d="M4 7h6" stroke="#666"/></svg><svg class="a" style="left:984px;top:465px" width="14" height="14" viewBox="0 0 14 14"><circle cx="7" cy="7" r="6" fill="#fff" stroke="#888"/><path d="M4 7h6M7 4v6" stroke="#666"/></svg><div class="a" style="left:921px;top:471px;width:62px;height:1px;background:#c8cbd0;"></div><div class="a" style="left:918px;top:472px;width:0;height:0;border-left:3.5px solid transparent;border-right:3.5px solid transparent;border-bottom:5px solid #e0613a"></div><div class="t" style="left:918px;top:461px;font-size:9px;color:#666;">0%</div><div class="a" style="left:809px;top:496px;width:89px;height:21px;background:#fafafa;border:1px solid #c9c9c9;box-shadow:1px 1px 2px rgba(0,0,0,.25)"></div><div class="t" style="left:813px;top:499px;font-size:13.5px;color:#757575;">截图(Alt + A)</div><div class="a" style="left:805px;top:614px;width:47px;height:21px;background:#fff;border:1px solid #ebedf0;border-radius:2px"></div><div class="t" style="left:810px;top:621.5px;font-size:10px;color:#404040;">全部应用</div><div class="a" style="left:858px;top:614px;width:47px;height:21px;background:#fff;border:1px solid #ebedf0;border-radius:2px"></div><div class="t" style="left:863px;top:621.5px;font-size:10px;color:#404040;">重置背景</div><div class="a" style="left:1020px;top:232px;width:15px;height:1px;background:#cfd2d7;"></div><div class="a" style="left:1020px;top:235px;width:15px;height:1px;background:#cfd2d7;"></div><div class="a" style="left:1014px;top:246px;width:26px;height:26px;background:#e2e5ea;border-radius:2px"></div><svg class="a" style="left:1019px;top:252px" width="16" height="14" viewBox="0 0 16 14"><path d="M0 3.5h9M13 3.5h3M0 10.5h3M7 10.5h9" stroke="#444" stroke-width="1.1"/><circle cx="11" cy="3.5" r="2" fill="none" stroke="#444" stroke-width="1.1"/><circle cx="5" cy="10.5" r="2" fill="none" stroke="#444" stroke-width="1.1"/></svg><svg class="a" style="left:1019px;top:281px" width="15" height="15" viewBox="0 0 15 15"><path d="M8 1l1.8 4 4.2.4-3.2 2.8 1 4.3L8 10.3 4.3 12.5l1-4.3L2 5.4l4.2-.4z" fill="none" stroke="#444" stroke-width="1.1"/><path d="M1 14l3-3M1 10l2-2" stroke="#444" stroke-width="1.1"/></svg><svg class="a" style="left:1019px;top:311px" width="15" height="14" viewBox="0 0 15 14"><path d="M1 1h13v9H9M5 10H1V1" fill="none" stroke="#444" stroke-width="1.1"/><path d="M4 12.5h5l-1.5-1.5M11 5.5H6l1.5 1.5" fill="none" stroke="#444" stroke-width="1.1"/></svg><svg class="a" style="left:1019px;top:341px" width="15" height="15" viewBox="0 0 15 15"><circle cx="7.5" cy="7.5" r="6.5" fill="none" stroke="#444" stroke-width="1.1"/><path d="M5.3 5.8a2.2 2.2 0 1 1 3 2c-.6.3-.8.7-.8 1.4" fill="none" stroke="#444" stroke-width="1.1"/><circle cx="7.5" cy="11" r=".8" fill="#444"/></svg><svg class="a" style="left:1019px;top:370px" width="15" height="15" viewBox="0 0 15 15"><path d="M7 13H1V1h12v6" fill="none" stroke="#444" stroke-width="1.1"/><path d="M1 5h12M3 9l2 2M3 11l2-2" stroke="#444" stroke-width="1"/><circle cx="11" cy="11" r="3.3" fill="none" stroke="#444" stroke-width="1.1"/><path d="M11 9.5v1.5h1" stroke="#444"/></svg><div class="a" style="left:1011px;top:606px;width:34px;height:1px;background:#e5e7eb;"></div><svg class="a" style="left:1020px;top:625px" width="15" height="6" viewBox="0 0 15 6"><circle cx="2.5" cy="3" r="1.8" fill="none" stroke="#666"/><circle cx="7.5" cy="3" r="1.8" fill="none" stroke="#666"/><circle cx="12.5" cy="3" r="1.8" fill="none" stroke="#666"/></svg><div class="a" style="left:1038px;top:437px;width:7px;height:42px;background:#fff;border:1px solid #777;border-radius:3.5px"></div><div class="a" style="left:1040px;top:446px;width:3px;height:31px;background:#e04a4a;border-radius:1.5px"></div>
<div class="a" style="left:836px;top:242px;width:181px;height:20px;background:#fff;border:1px solid #d6dbe3;box-shadow:0 1px 2px rgba(0,0,0,.12)"></div>
<svg class="a" style="left:831px;top:240px" width="24" height="24" viewBox="0 0 24 24"><rect x="2" y="2" width="20" height="20" rx="5" fill="#ef5a24" transform="rotate(-12 12 12)"/><path d="M16 7.5c-1-1-2.5-1.4-4-1.2-2 .3-3.2 1.6-2.9 3 .3 1.6 2.6 1.9 4.1 2.4 1.6.5 2.4 1.5 2 2.9-.5 1.7-3 2.4-5.4 1.6-.9-.3-1.5-.7-2-1.3" fill="none" stroke="#fff" stroke-width="2.4" stroke-linecap="round"/></svg>
<div class="t" style="left:857px;top:246px;font-size:12px;color:#2a74d6;font-weight:bold">中</div>
<svg class="a" style="left:876px;top:246px" width="12" height="12" viewBox="0 0 12 12"><path d="M8 1a5 5 0 1 0 3 8 4.5 4.5 0 0 1-3-8z" fill="#2a74d6"/></svg>
<svg class="a" style="left:894px;top:246px" width="12" height="12" viewBox="0 0 12 12"><circle cx="3" cy="3" r="1.5" fill="#2a74d6"/><path d="M9 6.5c.8 0 1.2.6 1 1.5-.3 1.3-1.3 2.3-2.5 2.8" fill="none" stroke="#2a74d6" stroke-width="1.6"/><circle cx="9" cy="7" r="1.4" fill="#2a74d6"/></svg>
<svg class="a" style="left:910px;top:245px" width="14" height="14" viewBox="0 0 14 14"><circle cx="7" cy="7" r="6" fill="none" stroke="#2a74d6" stroke-width="1.5"/><circle cx="5" cy="5.5" r=".9" fill="#2a74d6"/><circle cx="9" cy="5.5" r=".9" fill="#2a74d6"/><path d="M4 8.3a3.3 3.3 0 0 0 6 0" fill="none" stroke="#2a74d6" stroke-width="1.3"/></svg>
<svg class="a" style="left:930px;top:244px" width="12" height="15" viewBox="0 0 12 15"><rect x="3.5" y="0.5" width="5" height="9" rx="2.5" fill="#2a74d6"/><path d="M1.5 7a4.5 4.5 0 0 0 9 0M6 11.5V14M3.5 14h5" fill="none" stroke="#2a74d6" stroke-width="1.3"/></svg>
<svg class="a" style="left:947px;top:247px" width="14" height="10" viewBox="0 0 14 10"><rect x=".5" y=".5" width="13" height="9" rx="1" fill="none" stroke="#2a74d6" stroke-width="1.2"/><path d="M2.5 3h1M5 3h1M7.5 3h1M10 3h1M2.5 5h1M5 5h1M7.5 5h1M10 5h1M4 7.3h6" stroke="#2a74d6" stroke-width="1"/></svg>
<svg class="a" style="left:966px;top:245px" width="15" height="14" viewBox="0 0 15 14"><circle cx="5" cy="3.5" r="2.5" fill="#b9c3cf"/><path d="M0.5 13c0-4 2-6 4.5-6s4 1.5 4.5 3" fill="#b9c3cf"/><rect x="7" y="8" width="8" height="5" rx="1" fill="#b9c3cf"/></svg>
<svg class="a" style="left:984px;top:246px" width="13" height="12" viewBox="0 0 13 12"><path d="M4.5 0.5L0.5 3l1.5 3 1.5-.8V11.5h6V5.2l1.5.8 1.5-3-4-2.5c-.5 1.2-1 1.7-2 1.7s-1.5-.5-2-1.7z" fill="#2a74d6"/></svg>
<svg class="a" style="left:1001px;top:245px" width="13" height="13" viewBox="0 0 13 13"><rect x="0" y="0" width="5.5" height="5.5" fill="#2a74d6"/><rect x="7" y="0" width="5.5" height="5.5" fill="#2a74d6"/><rect x="0" y="7" width="5.5" height="5.5" fill="#2a74d6"/><rect x="7" y="7" width="5.5" height="5.5" fill="#2a74d6"/></svg>

<div class="t" style="left:9px;top:651.5px;font-size:10.5px;color:#404040;">幻灯片 4 / 9</div><div class="a" style="left:72px;top:650px;width:1px;height:14px;background:#e3e3e3;"></div><div class="t" style="left:80px;top:651.5px;font-size:10.5px;color:#404040;">第一PPT，www.1ppt.com</div><div class="a" style="left:208px;top:650px;width:1px;height:14px;background:#e3e3e3;"></div><svg class="a" style="left:216px;top:650px" width="14" height="14" viewBox="0 0 14 14"><path d="M1 1.5h7M4.5 1.5V13M3 13h3" fill="none" stroke="#444" stroke-width="1.1"/><path d="M8.5 7a2 2 0 1 1 3 1.7c-.6.4-.9.8-.9 1.5" fill="none" stroke="#444" stroke-width="1.1"/><circle cx="10.6" cy="12.5" r=".7" fill="#444"/></svg><div class="t" style="left:232px;top:651.5px;font-size:10.5px;color:#404040;">缺失字体</div><div class="a" style="left:281px;top:650px;width:1px;height:14px;background:#e3e3e3;"></div><svg class="a" style="left:516px;top:650px" width="13" height="14" viewBox="0 0 13 14"><path d="M6.5 1L12 4v6l-5.5 3L1 10V4z M1 4l5.5 3L12 4M6.5 7v6" fill="none" stroke="#555" stroke-width="1.1"/></svg><div class="t" style="left:533px;top:651.5px;font-size:10.5px;color:#404040;">智能美化</div><div class="a" style="left:578px;top:656px;width:0;height:0;border-left:2.5px solid transparent;border-right:2.5px solid transparent;border-bottom:3px solid #555"></div><div class="a" style="left:592px;top:650px;width:1px;height:14px;background:#e3e3e3;"></div><svg class="a" style="left:602px;top:651px" width="14" height="12" viewBox="0 0 14 12"><path d="M0 1h8M0 5.5h14M0 10.5h14M10 0l1.5 2L13 0" fill="none" stroke="#444" stroke-width="1.1"/></svg><div class="t" style="left:617px;top:651.5px;font-size:10.5px;color:#404040;">备注</div><div class="a" style="left:640px;top:657px;width:0;height:0;border-left:2.5px solid transparent;border-right:2.5px solid transparent;border-top:3px solid #555"></div><svg class="a" style="left:651px;top:649px" width="15" height="15" viewBox="0 0 15 15"><path d="M9 2H1v10h3l2 2.5L8 12h6V7" fill="none" stroke="#444" stroke-width="1.1"/><path d="M12 0v5M9.5 2.5h5" stroke="#444" stroke-width="1.1"/></svg><div class="t" style="left:668px;top:651.5px;font-size:10.5px;color:#404040;">批注</div><div class="a" style="left:695px;top:650px;width:1px;height:14px;background:#e3e3e3;"></div><div class="a" style="left:702px;top:648px;width:19px;height:18px;background:#dfe2e8;border-radius:2px"></div><svg class="a" style="left:705px;top:651px" width="13" height="12" viewBox="0 0 13 12"><path d="M.5 .5h12v11H.5zM4.5 .5v11M4.5 8h8" fill="none" stroke="#444" stroke-width="1.1"/></svg><svg class="a" style="left:726px;top:651px" width="12" height="12" viewBox="0 0 12 12"><path d="M.5 .5h4.5v4.5H.5zM7 .5h4.5v4.5H7zM.5 7h4.5v4.5H.5zM7 7h4.5v4.5H7z" fill="none" stroke="#444" stroke-width="1.1"/></svg><svg class="a" style="left:747px;top:651px" width="14" height="12" viewBox="0 0 14 12"><path d="M.5 .5h5.5l1 1 1-1h5.5v10.5H8l-1 .5-1-.5H.5zM7 1.5v9.5" fill="none" stroke="#444" stroke-width="1.1"/></svg><div class="a" style="left:775px;top:647px;width:27px;height:20px;background:#5e6578;border-radius:2px"></div><div class="a" style="left:785px;top:651px;width:0;height:0;border-top:6px solid transparent;border-bottom:6px solid transparent;border-left:9px solid #fff"></div><div class="a" style="left:805px;top:656px;width:0;height:0;border-left:2.5px solid transparent;border-right:2.5px solid transparent;border-top:3px solid #555"></div><div class="a" style="left:817px;top:650px;width:1px;height:14px;background:#e3e3e3;"></div><svg class="a" style="left:825px;top:651px" width="13" height="13" viewBox="0 0 13 13"><path d="M.5 3.5v-3h3M9.5.5h3v3M12.5 9.5v3h-3M3.5 12.5h-3v-3" fill="none" stroke="#444" stroke-width="1.1"/><rect x="3.5" y="3.5" width="6" height="6" fill="none" stroke="#444" stroke-width="1.1"/></svg><div class="t" style="left:844px;top:651.5px;font-size:10.5px;color:#404040;">58%</div><div class="a" style="left:868px;top:657px;width:0;height:0;border-left:2.5px solid transparent;border-right:2.5px solid transparent;border-top:3px solid #555"></div><div class="a" style="left:883px;top:656.5px;width:9px;height:1.5px;background:#333;"></div><div class="a" style="left:901px;top:657px;width:111px;height:1px;background:#c9ccd2;"></div><div class="a" style="left:924px;top:651px;width:12px;height:12px;background:#fff;border:1px solid #555;border-radius:50%"></div><div class="a" style="left:957px;top:655px;width:1px;height:4px;background:#d0d3d8;"></div><svg class="a" style="left:1022px;top:652px" width="10" height="10" viewBox="0 0 10 10"><path d="M5 0v10M0 5h10" stroke="#333" stroke-width="1.5"/></svg>
<div class="a" style="left:383px;top:670px;width:40px;height:32px;background:#eceeec;"></div><div class="a" style="left:100px;top:700px;width:33px;height:1.5px;background:#5d615e;"></div><div class="a" style="left:142px;top:700px;width:32px;height:1.5px;background:#5d615e;"></div><div class="a" style="left:183px;top:700px;width:32px;height:1.5px;background:#5d615e;"></div><div class="a" style="left:383px;top:700px;width:40px;height:1.5px;background:#e8eae8;"></div><div class="a" style="left:427px;top:700px;width:30px;height:1.5px;background:#5d615e;"></div><div class="a" style="left:464px;top:700px;width:30px;height:1.5px;background:#5d615e;"></div><div class="a" style="left:502px;top:700px;width:33px;height:1.5px;background:#5d615e;"></div><svg class="a" style="left:0px;top:677px" width="28" height="19" viewBox="0 0 28 19"><path d="M0 1h16a9 9 0 0 1 0 18H0z" fill="#8e918e" opacity=".85"/><path d="M4 6h8M6 9.5h7M4 13h9" stroke="#e8e8e8" stroke-width="1.2"/><path d="M12.5 2.5l6-.9v7h-6zM19.5 1.5l7-1v8.1h-7zM12.5 9.5h6v7l-6-.9zM19.5 9.5h7v8.1l-7-1z" fill="#111"/></svg><div class="a" style="left:44px;top:676px;width:1px;height:20px;background:#333;"></div><div class="a" style="left:46.5px;top:676px;width:1px;height:20px;background:#333;"></div><svg class="a" style="left:67px;top:676px" width="18" height="20" viewBox="0 0 18 20"><circle cx="8.5" cy="10.5" r="7.5" fill="#5ec12f"/><path d="M3.5 10.5h10a5 5 0 0 0-10 0M3.6 12a5 5 0 0 0 9.6 1.5" fill="none" stroke="#fff" stroke-width="1.8"/><path d="M2 17c-3-3 3-12 12-15 3-1 4 1 3 3" fill="none" stroke="#8ed34e" stroke-width="1.5"/></svg><svg class="a" style="left:107px;top:677px" width="20" height="18" viewBox="0 0 20 18"><path d="M1 2h6l2 2h10v13H1z" fill="#f3c13a"/><path d="M1 6h18v11H1z" fill="#fbd55c"/><path d="M4 10h12v7h-3v-4H7v4H4z" fill="#2f86d6"/></svg><svg class="a" style="left:147px;top:676px" width="21" height="20" viewBox="0 0 21 20"><circle cx="10.5" cy="10" r="9.5" fill="#1f8ee3"/><path d="M20 10c0-5-4-9.5-9.5-9.5S1 5 1 9c2-4 9-5 10 0 .5 2-2 3-4 3" fill="#3cc46b"/><path d="M6 12c0 4 5 6 9 4" fill="none" stroke="#0d5fb8" stroke-width="2.5"/></svg><svg class="a" style="left:188px;top:676px" width="21" height="20" viewBox="0 0 21 20"><rect width="21" height="20" rx="4" fill="#e3202e"/><circle cx="10" cy="11.5" r="4.5" fill="none" stroke="#fff" stroke-width="1.8"/><path d="M12 4.5c-2-1-6 0-6 4" fill="none" stroke="#fff" stroke-width="1.8"/></svg><svg class="a" style="left:229px;top:676px" width="21" height="20" viewBox="0 0 21 20"><path d="M7 5V3a3.5 3.5 0 0 1 7 0v2" fill="none" stroke="#333" stroke-width="1.5"/><rect x="1" y="5" width="19" height="15" rx="1" fill="#3a3a3a"/><rect x="6.5" y="9" width="3.5" height="3.5" fill="#f25022"/><rect x="11" y="9" width="3.5" height="3.5" fill="#7fba00"/><rect x="6.5" y="13.5" width="3.5" height="3.5" fill="#00a4ef"/><rect x="11" y="13.5" width="3.5" height="3.5" fill="#ffb900"/></svg><div class="a" style="left:271px;top:676px;width:18px;height:18px;background:#001e36;border:1.5px solid #31a8ff;border-radius:2px"></div><div class="t" style="left:274px;top:680.5px;font-size:10px;color:#31a8ff;font-weight:bold;letter-spacing:-.3px">Ps</div><div class="a" style="left:312px;top:676px;width:18px;height:18px;background:#2a0033;border:1.5px solid #9999ff;border-radius:2px"></div><div class="t" style="left:315px;top:680.5px;font-size:10px;color:#e8a6ff;font-weight:bold;letter-spacing:-.3px">Pr</div><div class="a" style="left:353px;top:676px;width:18px;height:18px;background:#330000;border:1.5px solid #ff9a00;border-radius:2px"></div><div class="t" style="left:356px;top:680.5px;font-size:10px;color:#ff9a00;font-weight:bold;letter-spacing:-.3px">Ai</div><svg class="a" style="left:392px;top:678px" width="21" height="16" viewBox="0 0 21 16"><path d="M0.5 1h5l3 10 2-6h2l2 6 3-10h3l-5 14h-3l-2-6-2 6H5z" fill="#ea3b2e"/></svg><svg class="a" style="left:434px;top:676px" width="19" height="19" viewBox="0 0 19 19"><rect width="19" height="19" rx="3.5" fill="#1877e8"/><path d="M3 12l3-4 2.5 2 3-4 4.5 6h-3l-1.5-2-2 2.5-2.5-2-1 1.5z" fill="#fff"/></svg><svg class="a" style="left:474px;top:676px" width="20" height="19" viewBox="0 0 20 19"><rect x=".5" y=".5" width="19" height="18" fill="#9aa4e8" stroke="#3d48b8"/><path d="M6 3l6 1 5 4-3 7-8-2z" fill="#d33b5c"/><path d="M3 10l6 7 8-4" fill="#fff" stroke="#3a9a4a"/><path d="M9 4l3 5" stroke="#fff"/></svg><svg class="a" style="left:515px;top:677px" width="21" height="18" viewBox="0 0 21 18"><ellipse cx="8" cy="7" rx="7.5" ry="6.5" fill="#32c248"/><path d="M3 13l1-2.5 3 1z" fill="#32c248"/><ellipse cx="14" cy="12" rx="6.5" ry="5.5" fill="#eef0ee"/><circle cx="12" cy="11.5" r=".8" fill="#999"/><circle cx="16" cy="11.5" r=".8" fill="#999"/><circle cx="5.5" cy="5.5" r=".9" fill="#fff"/><circle cx="10" cy="5.5" r=".9" fill="#fff"/></svg><svg class="a" style="left:595px;top:676px" width="11" height="19" viewBox="0 0 11 19"><path d="M2.5 .5h1.5v4h3v-4h1.5v4H10v4.5a3.5 3.5 0 0 1-3.5 3.5v6.5h-2V12.5A3.5 3.5 0 0 1 1 9V4.5h1.5z" fill="#fff" stroke="#c8ccc6" stroke-width=".7"/></svg><div class="a" style="left:606px;top:677px;width:34px;height:18px;background:#fff;border:1px solid #c8c8c8;border-radius:1px"></div><div class="a" style="left:608.5px;top:679.5px;width:12px;height:13px;background:#17a049;"></div><div class="a" style="left:620.5px;top:679.5px;width:17.5px;height:13px;background:#9c9f9b;"></div><div class="a" style="left:640px;top:681px;width:3px;height:9px;background:#fff;border:1px solid #c8c8c8;border-left:0"></div><div class="t" style="left:613px;top:680.5px;font-size:10px;color:#eee;">41%</div><svg class="a" style="left:734px;top:677px" width="21" height="18" viewBox="0 0 21 18"><path d="M11 1a7 7 0 1 0 6 10 6 6 0 0 1-6-10z" fill="#f5b82a"/><ellipse cx="9" cy="14" rx="8" ry="3" fill="#e9e4d6"/><path d="M3 13h13" stroke="#c2baa4"/></svg><div class="t" style="left:760px;top:680px;font-size:12.5px;color:#111;font-weight:500">8°C</div><div class="t" style="left:785px;top:680px;font-size:12px;color:#111;">雾</div><svg class="a" style="left:810px;top:682px" width="13" height="8" viewBox="0 0 13 8"><path d="M1 7l5.5-6L12 7" fill="none" stroke="#222" stroke-width="1.3"/></svg><svg class="a" style="left:830px;top:680px" width="14" height="13" viewBox="0 0 14 13"><path d="M1 12a11 11 0 0 1 11-11M4 12a8 8 0 0 1 8-8M7 12a5 5 0 0 1 5-5" fill="none" stroke="#555" stroke-width="1.1"/><circle cx="11" cy="11" r="1.2" fill="#555"/></svg><svg class="a" style="left:848px;top:680px" width="15" height="13" viewBox="0 0 15 13"><path d="M1 4.5h3l4-3.5v11L4 8.5H1z" fill="none" stroke="#333" stroke-width="1.1"/><path d="M10 4a3 3 0 0 1 0 5M12 2a6 6 0 0 1 0 9" fill="none" stroke="#333" stroke-width="1.1"/></svg><svg class="a" style="left:872px;top:679px" width="14" height="14" viewBox="0 0 14 14"><path d="M2 12l3-1 7-7-2-2-7 7z" fill="none" stroke="#333" stroke-width="1.2"/><path d="M1 13c2-2 1-4 3-4" fill="none" stroke="#333"/></svg><svg class="a" style="left:893px;top:679px" width="15" height="15" viewBox="0 0 15 15"><rect x="1" y="3" width="13" height="8" fill="none" stroke="#b0b4b0" stroke-width="1.2"/><path d="M7.5 0v15M1 7h13" stroke="#b0b4b0" stroke-width="1.2"/></svg><svg class="a" style="left:916px;top:678px" width="16" height="16" viewBox="0 0 16 16"><rect x="1" y="1" width="14" height="14" rx="3" fill="#f0602a" transform="rotate(-10 8 8)"/><path d="M11 4.5c-.8-.7-2-1-3-.8-1.5.2-2.3 1.2-2 2.1.3 1 1.8 1.3 3 1.7 1.2.4 1.7 1.1 1.3 2-.4 1.2-2.2 1.6-3.8 1.1-.6-.2-1-.5-1.4-.9" fill="none" stroke="#fff" stroke-width="1.7" stroke-linecap="round"/></svg><div class="t" style="left:956px;top:672px;font-size:11px;color:#111;">21:11</div><div class="t" style="left:942px;top:688px;font-size:11px;color:#111;">2021/10/24</div><svg class="a" style="left:1011px;top:678px" width="16" height="16" viewBox="0 0 16 16"><path d="M1 1h13v10H8l-4 4v-4H1z" fill="#222"/><path d="M3.5 4h8M3.5 6.5h8M3.5 9h5" stroke="#fff" stroke-width="1"/><circle cx="12.5" cy="12.5" r="3" fill="#888" stroke="#d9ded7"/></svg><div class="a" style="left:1042px;top:670px;width:1px;height:32px;background:#b8bcb6;"></div>
<div class="a" style="left:1051px;top:288px;width:210px;height:118px;background:#232427;border:1px solid #2c9a4c;border-radius:2px"></div><div class="a" style="left:1051px;top:411px;width:210px;height:118px;background:#232427;border:1px solid #3b3c40;border-radius:2px"></div><svg class="a" style="left:1126.5px;top:313px" width="58" height="58" viewBox="0 0 58 58"><defs><clipPath id="c1"><circle cx="29" cy="29" r="29"/></clipPath><linearGradient id="sea" x1="0" y1="0" x2="0" y2="1"><stop offset="0" stop-color="#6f92bd"/><stop offset="1" stop-color="#4a6d9c"/></linearGradient></defs>
<g clip-path="url(#c1)"><rect width="58" height="18" fill="#e2e7ec"/><rect y="17.7" width="58" height="41" fill="url(#sea)"/>
<path d="M20 14C20 5 28 2 36 2.5s15 5 16 13c1 9 1 20-1 28L33 56 23 50c-3-10-4-24-3-36z" fill="#151315"/>
<path d="M27 15c4-1 12-1 15 2 3 4 3 12 0 18-3 3-8 3-11 0-3-2-4-8-5-12z" fill="#ead6cf"/>
<path d="M22 16c3 4 5 8 6 18-2 4-4 10-5 16l-3-6z" fill="#151315"/>
<path d="M35 40c6-4 15-2 19 6v12H38z" fill="#e6cbbf"/>
<path d="M29 58l7-17 4 2-1 15z" fill="#f0f0f2"/>
<path d="M29.5 30.5h3" stroke="#b9444b" stroke-width="1.4"/>
<path d="M29 22.5h3M36 22h3" stroke="#5a3a3a" stroke-width="1"/></g></svg><svg class="a" style="left:1126.5px;top:435.5px" width="58" height="58" viewBox="0 0 58 58"><defs><clipPath id="c2"><circle cx="29" cy="29" r="29"/></clipPath></defs>
<g clip-path="url(#c2)"><rect width="58" height="58" fill="#f2f2f2"/>
<g fill="none" stroke="#1a1a1a" stroke-width=".8"><path d="M4 10c-5 14-5 32 2 46M9 6c-6 16-5 34 3 50M14 4c-4 14-3 32 3 52M19 2c-3 14-1 30 5 52M24 2c-1 8 0 16 1 22M31 1c1 6 2 12 2 20M37 2c3 10 5 24 5 54M43 4c5 12 7 30 5 52M48 8c5 10 8 26 6 46M53 14c3 10 4 24 2 40"/>
<path d="M2 20c4 4 6 10 6 18M6 30c3 6 4 14 3 22M50 30c-2 6-3 14-2 24M46 36c-1 6 0 14 2 20" stroke-width=".6"/>
<path d="M15 24c3-1 6-1 8 1M29 19c3-1 7 0 9 2M22 41c3 3 8 3 11 0M44 8c5 1 9 4 11 9M42 14c5 0 9 3 11 7" stroke-width=".9"/></g>
<ellipse cx="33" cy="21" rx="3.5" ry="2.6" fill="#111"/><ellipse cx="18.5" cy="26" rx="2.6" ry="2" fill="#222"/>
<circle cx="49" cy="19" r="2.6" fill="#111"/><path d="M49 19l3 7" stroke="#111" stroke-width="1.2"/>
<path d="M19 43c2 4 3 7 6 9 3-2 3-5 2-8z" fill="#111"/>
<path d="M24 52l6 4 6-6" fill="none" stroke="#111" stroke-width="1.3"/>
<path d="M27 31l1 .8" stroke="#444"/>
<path d="M27 9l2-3 2 3" fill="none" stroke="#333" stroke-width=".7"/></g></svg><div class="a" style="left:1052px;top:388px;width:97px;height:16px;background:#1a1b1d"></div><svg class="a" style="left:1053px;top:390px" width="12" height="12" viewBox="0 0 12 12"><rect x=".5" y=".5" width="11" height="8.5" rx="1" fill="#fff"/><path d="M3 7l5-4M5.5 3H8v2.5" stroke="#1a1b1d" stroke-width="1.1" fill="none"/><path d="M3 11h6" stroke="#fff" stroke-width="1.2"/></svg><svg class="a" style="left:1069px;top:389px" width="10" height="14" viewBox="0 0 10 14"><rect x="2.5" y=".5" width="5" height="8.5" rx="2.5" fill="#38d25a"/><path d="M1 6.5a4 4 0 0 0 8 0M5 10.5V13M3 13h4" fill="none" stroke="#eee" stroke-width="1.1"/></svg><div class="t" style="left:1083px;top:391.5px;font-size:8px;color:#f0f0f0">赵耘嘉的屏幕共享</div><div class="a" style="left:1052px;top:511px;width:75px;height:16px;background:#1a1b1d"></div><svg class="a" style="left:1052px;top:511px" width="16" height="16" viewBox="0 0 16 16"><rect width="16" height="16" fill="#f07d1a"/><circle cx="8" cy="6" r="2.8" fill="#fff"/><path d="M3 14c0-3 2-5 5-5s5 2 5 5z" fill="#fff"/></svg><svg class="a" style="left:1072px;top:512px" width="11" height="14" viewBox="0 0 11 14"><rect x="3" y=".5" width="5" height="8.5" rx="2.5" fill="none" stroke="#ddd" stroke-width="1"/><path d="M1.5 6.5a4 4 0 0 0 8 0M5.5 10.5V13M3.5 13h4" fill="none" stroke="#ddd" stroke-width="1"/><path d="M1 12L10 2" stroke="#e2433c" stroke-width="1.4"/></svg><div class="t" style="left:1088px;top:514px;font-size:9px;color:#f0f0f0">evermore</div><div class="a" style="left:0;top:775px;width:124px;height:14px;background:#161719"></div><svg class="a" style="left:1px;top:779px" width="11" height="11" viewBox="0 0 11 11"><rect x=".5" y=".5" width="10" height="7.5" rx="1" fill="#eee"/><path d="M3 6.5l4.5-3.5M5 3h2.5v2.5" stroke="#161719" stroke-width="1" fill="none"/><path d="M2.5 10.5h6" stroke="#eee" stroke-width="1.1"/></svg><svg class="a" style="left:14px;top:778px" width="9" height="13" viewBox="0 0 9 13"><rect x="2" y=".5" width="5" height="8" rx="2.5" fill="#38d25a"/><path d="M.8 6a3.7 3.7 0 0 0 7.4 0M4.5 9.8V12.5" fill="none" stroke="#ddd" stroke-width="1"/></svg><div class="t" style="left:25px;top:778.5px;font-size:12px;color:#eee">赵耘嘉的屏幕共享</div><svg class="a" style="left:152px;top:101px" width="11" height="16" viewBox="0 0 11 16"><path d="M1 1v12.5l3-3 2.2 4.8 2-1-2.2-4.6H10z" fill="#fff" stroke="#000" stroke-width=".9"/></svg><svg class="a" style="left:213.5px;top:469.5px" width="16" height="16" viewBox="0 0 16 16"><g fill="#fff" stroke="#111" stroke-width="1.1"><path d="M8 .8l3 3H5z"/><path d="M8 15.2l3-3H5z"/><path d="M.8 8l3-3v6z"/><path d="M15.2 8l-3-3v6z"/></g><path d="M8 3.8v8.4M3.8 8h8.4" stroke="#111" stroke-width="1.2"/></svg><svg class="a" style="left:220px;top:477px" width="12" height="18" viewBox="0 0 12 18"><path d="M1 1v14l3.3-3.2 2.4 5.3 2.2-1-2.4-5.1H11z" fill="#fff" stroke="#000" stroke-width="1.1"/></svg>
<div class="a" style="left:0;top:140px;width:1px;height:530px;background:#d5d6d9"></div>
</body></html>
